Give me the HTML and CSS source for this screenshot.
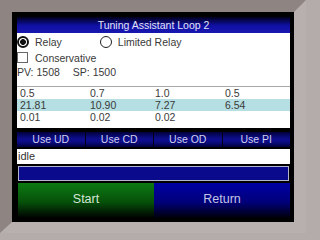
FILE: index.html
```html
<!DOCTYPE html>
<html>
<head>
<meta charset="utf-8">
<link rel="stylesheet" href="styles.css">
</head>
<body>
<div class="bezel">
  <div class="screen">
    <div class="title">Tuning Assistant Loop 2</div>
    <div class="panel">
      <div class="opts">
        <span class="radio on"></span><span class="lbl">Relay</span>
        <span class="radio second"></span><span class="lbl">Limited Relay</span>
      </div>
      <div class="check-row">
        <span class="check"></span><span class="lbl">Conservative</span>
      </div>
      <div class="pv-row"><span>PV: 1508</span><span class="sp">SP: 1500</span></div>
      <div class="table">
        <div class="trow"><span>0.5</span><span>0.7</span><span>1.0</span><span>0.5</span></div>
        <div class="trow hl"><span>21.81</span><span>10.90</span><span>7.27</span><span>6.54</span></div>
        <div class="trow"><span>0.01</span><span>0.02</span><span>0.02</span><span></span></div>
      </div>
    </div>
    <div class="usebar">
      <div class="usebtn">Use UD</div>
      <div class="usebtn">Use CD</div>
      <div class="usebtn">Use OD</div>
      <div class="usebtn">Use PI</div>
    </div>
    <div class="status">idle</div>
    <div class="progress"></div>
    <div class="actions">
      <div class="btn start">Start</div>
      <div class="btn ret">Return</div>
    </div>
  </div>
</div>
</body>
</html>
```
FILE: styles.css
```css
html, body {
  margin: 0;
  padding: 0;
  background: #b4acaa;
}
body {
  width: 306px;
  height: 233px;
  overflow: hidden;
  font-family: "Liberation Sans", Arial, sans-serif;
}
.bezel {
  width: 306px;
  height: 233px;
  box-sizing: border-box;
  border-style: solid;
  border-width: 12px 12px 11px 12px;
  border-color: #8e8482 #b8b0ae #b8b0ae #8e8482;
  box-shadow: inset 0 0 0 1px #c4bcba;
  display: flex;
}
.screen {
  flex: 1;
  background: #000;
  padding: 5px 4px 4px 5px;
  display: flex;
  flex-direction: column;
}
.title {
  height: 16px;
  line-height: 16px;
  text-align: center;
  color: #e2e2f6;
  font-size: 10.5px;
  background: linear-gradient(#00001c, #1010a6 55%, #1818b0);
}
.panel {
  height: 95px;
  background: #fff;
  color: #3a3a3a;
  font-size: 10.5px;
  display: flex;
  flex-direction: column;
}
.opts {
  margin-top: 3px;
  height: 12px;
  display: flex;
  align-items: center;
}
.radio {
  width: 12px;
  height: 12px;
  box-sizing: border-box;
  border: 1px solid #222;
  border-radius: 50%;
  background: #fff;
  flex: none;
}
.radio.on {
  border: 2px solid #111;
  background: radial-gradient(circle, #111 0 2.6px, #fff 3.2px);
}
.radio.second {
  margin-left: 38px;
}
.lbl {
  margin-left: 6px;
  line-height: 12px;
}
.opts .radio:first-child {
  margin-left: 0;
}
.check-row {
  margin-top: 4px;
  height: 11px;
  display: flex;
  align-items: center;
}
.check {
  width: 11px;
  height: 11px;
  box-sizing: border-box;
  border: 1px solid #666;
  flex: none;
}
.check-row .lbl {
  margin-left: 7px;
}
.pv-row {
  margin-top: 3px;
  height: 12px;
  line-height: 12px;
  display: flex;
}
.sp {
  margin-left: 13px;
}
.table {
  margin-top: 8px;
  border-top: 1px solid #a8a8a8;
}
.trow {
  height: 12px;
  line-height: 12px;
  display: grid;
  grid-template-columns: 70px 65px 70px 1fr;
  padding-left: 3px;
}
.trow.hl {
  background: #b5dfe3;
}
.usebar {
  margin-top: 4px;
  height: 15px;
  display: flex;
}
.usebtn {
  flex: 1;
  text-align: center;
  line-height: 15px;
  font-size: 10.5px;
  color: #cfd0ee;
  background: linear-gradient(#00003c, #0e0e8e 45%, #0c0c86 65%, #00003a);
  border-right: 1px solid #000018;
}
.usebtn:last-child {
  border-right: none;
}
.status {
  margin-top: 2px;
  height: 15px;
  line-height: 15px;
  background: #fff;
  color: #333;
  font-size: 11px;
  padding-left: 1px;
}
.progress {
  margin: 2px 1px 0 1px;
  height: 15px;
  box-sizing: border-box;
  background: #0a0a8c;
  border: 1px solid #b4b4cc;
}
.actions {
  margin-top: 2px;
  flex: 1;
  display: flex;
}
.btn {
  flex: 1;
  display: flex;
  align-items: center;
  justify-content: center;
  font-size: 12.5px;
  padding-bottom: 3px;
}
.start {
  margin-left: 1px;
  color: #d6e6d6;
  background: linear-gradient(#0c7a12, #06500a 55%, #000 100%);
}
.ret {
  color: #c4c4e6;
  background: linear-gradient(#0000a4, #00007a 55%, #000008 100%);
}
```
